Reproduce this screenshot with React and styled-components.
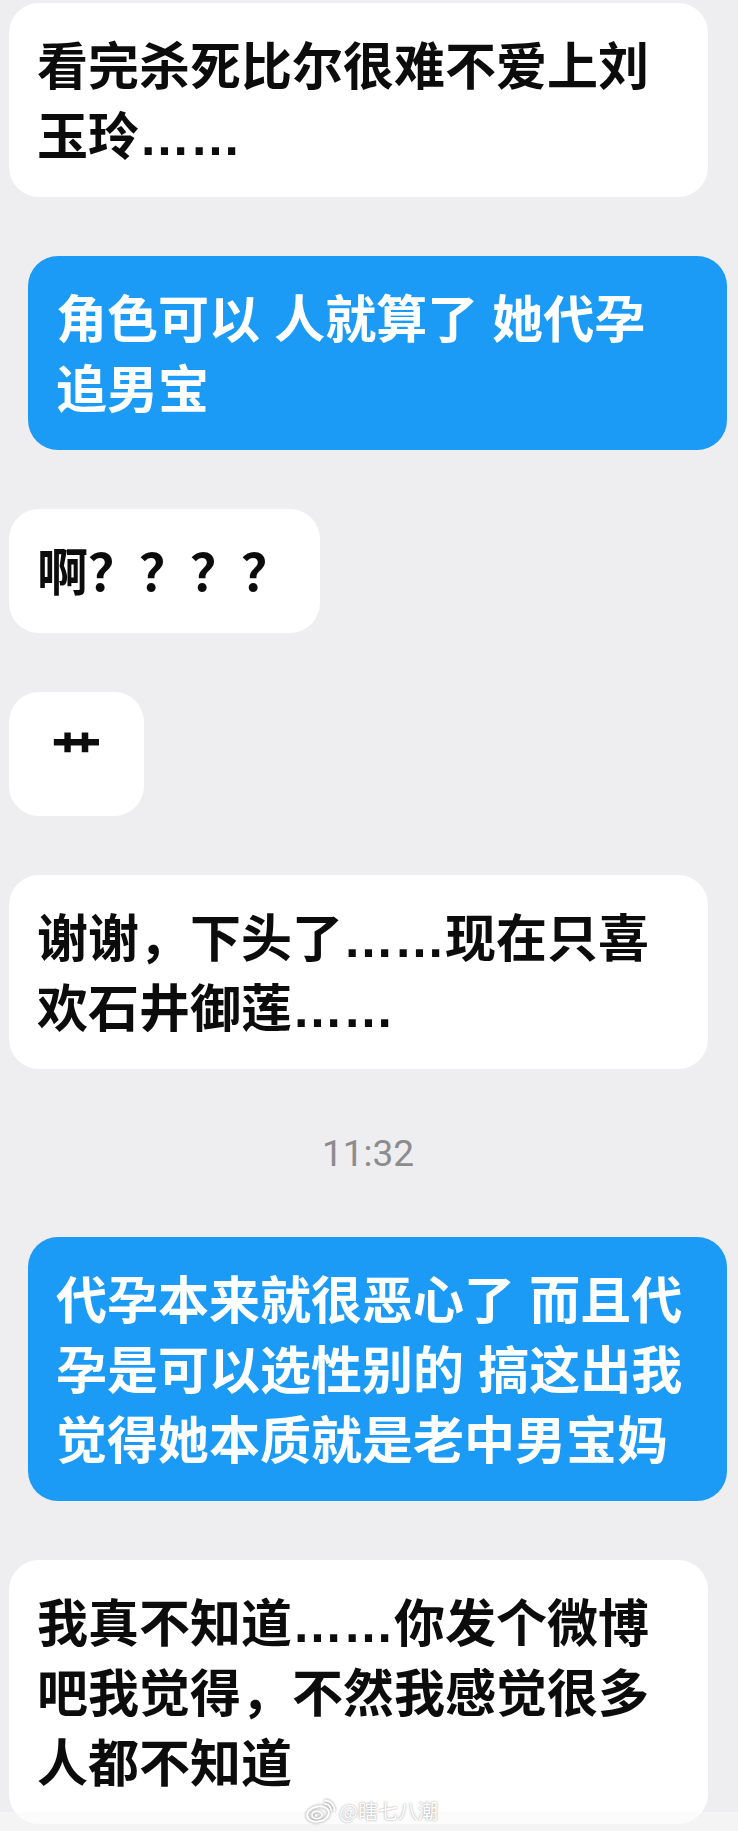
import React from 'react';
import styled, { createGlobalStyle } from 'styled-components';

const GlobalStyle = createGlobalStyle`
	html, body {
		margin: 0;
		padding: 0;
		background: #eeeef0;
	}
	body {
		font-family: "Liberation Sans", "Noto Sans CJK SC", sans-serif;
	}
`;

const Page = styled.div`
	position: relative;
	width: 738px;
	height: 1831px;
	overflow: hidden;
	background: #eeeef0;
	padding-top: 3px;
	box-sizing: border-box;
`;

const Thread = styled.div`
	display: flex;
	flex-direction: column;
	gap: 59px;
	padding: 0 11px 0 9px;
`;

const Row = styled.div`
	display: flex;
	justify-content: ${(p) => (p.$mine ? 'flex-end' : 'flex-start')};
`;

const Bubble = styled.div`
	box-sizing: border-box;
	width: ${(p) => (p.$wide ? '699px' : 'auto')};
	min-width: 135px;
	padding: 30px 28px 24px;
	border-radius: 30px;
	background: ${(p) => (p.$mine ? '#1b9bf6' : '#ffffff')};
	color: ${(p) => (p.$mine ? '#ffffff' : '#0c0c0c')};
	font-family: "Liberation Sans", "Noto Sans CJK SC", sans-serif;
	font-size: 51px;
	font-weight: 700;
	line-height: 70px;
	text-align: ${(p) => (p.$center ? 'center' : 'left')};
`;

const Line = styled.div`
	white-space: nowrap;
`;

const TimeStamp = styled.div`
	height: 50px;
	display: flex;
	align-items: center;
	justify-content: center;
	font-family: Roboto, "Liberation Sans", sans-serif;
	font-size: 37px;
	color: #8c8c8e;
`;

const FooterBand = styled.div`
	position: absolute;
	left: 0;
	right: 0;
	bottom: 0;
	height: 19px;
	background: rgba(250, 250, 250, 0.55);
`;

const Watermark = styled.div`
	position: absolute;
	left: 306px;
	bottom: 8px;
	display: flex;
	align-items: center;
	gap: 3px;
	color: #ffffff;
	font-family: "Noto Sans CJK SC", sans-serif;
	font-size: 20px;
	line-height: 24px;
	text-shadow: 0 0 2px rgba(0, 0, 0, 0.45);
`;

const WeiboLogo = () => (
	<svg width="30" height="24" viewBox="0 0 30 24" style={{ filter: 'drop-shadow(0 0 1.5px rgba(0,0,0,0.45))' }}>
		<ellipse cx="12" cy="15" rx="11" ry="7.5" transform="rotate(-12 12 15)" fill="none" stroke="#fff" strokeWidth="2" />
		<ellipse cx="11" cy="16" rx="5" ry="3.6" fill="none" stroke="#fff" strokeWidth="1.8" />
		<circle cx="10" cy="16.5" r="1.4" fill="#fff" />
		<path d="M19 5 A6 6 0 0 1 25 11" fill="none" stroke="#fff" strokeWidth="1.8" strokeLinecap="round" />
		<path d="M19 1.5 A9.5 9.5 0 0 1 28.5 11" fill="none" stroke="#fff" strokeWidth="1.8" strokeLinecap="round" />
	</svg>
);

const messages = [
	{ mine: false, wide: true, lines: ['看完杀死比尔很难不爱上刘', '玉玲……'] },
	{ mine: true, wide: true, lines: ['角色可以 人就算了 她代孕', '追男宝'] },
	{ mine: false, lines: ['啊？？？？'] },
	{ mine: false, center: true, lines: ['艹'] },
	{ mine: false, wide: true, lines: ['谢谢，下头了……现在只喜', '欢石井御莲……'] },
	{ time: '11:32' },
	{
		mine: true,
		wide: true,
		lines: ['代孕本来就很恶心了 而且代', '孕是可以选性别的 搞这出我', '觉得她本质就是老中男宝妈'],
	},
	{
		mine: false,
		wide: true,
		lines: ['我真不知道……你发个微博', '吧我觉得，不然我感觉很多', '人都不知道'],
	},
];

const App = () => (
	<>
		<GlobalStyle />
		<Page>
			<Thread>
				{messages.map((m, i) =>
					m.time ? (
						<TimeStamp key={i}>{m.time}</TimeStamp>
					) : (
						<Row key={i} $mine={m.mine}>
							<Bubble $mine={m.mine} $wide={m.wide} $center={m.center}>
								{m.lines.map((l, j) => (
									<Line key={j}>{l}</Line>
								))}
							</Bubble>
						</Row>
					)
				)}
			</Thread>
			<FooterBand />
			<Watermark>
				<WeiboLogo />
				<span>@瞎七八潮</span>
			</Watermark>
		</Page>
	</>
);

export default App;
